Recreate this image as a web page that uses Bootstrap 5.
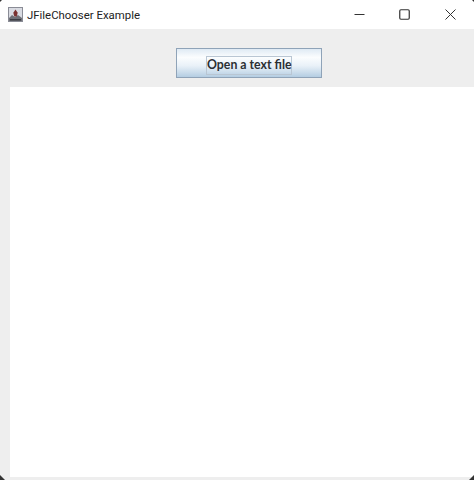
<!DOCTYPE html>
<html lang="en">
<head>
<meta charset="utf-8">
<title>JFileChooser Example</title>
<link href="https://cdn.jsdelivr.net/npm/bootstrap@5.3.0/dist/css/bootstrap.min.css" rel="stylesheet">
<style>
html,body{height:480px;overflow:hidden;background:#fff}
.win-frame{width:474px;height:480px;position:relative;overflow:hidden}
.win-title{height:29px;background:#fff;padding-left:8px;padding-right:1px}
.win-title-text{font:11.4px Roboto,"Liberation Sans",sans-serif;color:#222;margin-left:4px;line-height:30px;white-space:nowrap}
.win-ctrl{width:45.5px;height:29px}
.tool-band{height:58px;background:#eeeeee;padding-top:19px;padding-left:24px}
.open-btn{width:146px;height:30px;padding:5px 0 0;border:1px solid #8fa3b8;border-radius:0;background:linear-gradient(#dfeaf4 0%,#fbfdfe 30%,#e9f1f8 60%,#b4cde2 100%);line-height:0}
.open-label{display:inline-block;font:bold 12.3px/16px Lato,"Liberation Sans",sans-serif;color:#2b2f33;border:1px solid #b9c6d3;width:86px;height:19px;white-space:nowrap;text-align:center;vertical-align:top}
.body-wrap{height:393px;background:#eeeeee;padding:0 0 3px 10px}
.text-pane{height:100%;background:#fff}
.corner-a,.corner-b{position:absolute;width:5px;height:5px;background:#333}
.corner-a{left:-1px;top:-2px;clip-path:polygon(0 0,100% 0,0 100%)}
.corner-b{right:-1px;top:-2px;clip-path:polygon(0 0,100% 0,100% 100%)}
.corner-c{position:absolute;left:0;bottom:0;width:5px;height:5px;background:#333;clip-path:polygon(0 0,100% 100%,0 100%)}
.corner-d{position:absolute;right:0;bottom:0;width:5px;height:5px;background:#333;clip-path:polygon(100% 0,100% 100%,0 100%)}
</style>
</head>
<body>
<div class="win-frame">
  <div class="win-title d-flex align-items-center">
    <svg width="15" height="15" viewBox="0 0 15 15" aria-hidden="true">
      <rect width="15" height="15" fill="#d9dbe2"/>
      <rect x=".5" y=".5" width="14" height="14" fill="none" stroke="#8a8c96"/>
      <path d="M1 11l3-3 3 2 3-2 4 3v3H1z" fill="#6f7077"/>
      <path d="M7.5 2.5l2.2 3.2-1 3.8h-2.4l-1-3.8z" fill="#7a3130"/>
      <path d="M2 12h11v1.5H2z" fill="#3c3d44"/>
    </svg>
    <span class="win-title-text flex-grow-1">JFileChooser Example</span>
    <div class="d-flex">
      <div class="win-ctrl d-flex align-items-center justify-content-center">
        <svg width="11" height="11" viewBox="0 0 11 11"><path d="M.5 5.5h10" stroke="#333" fill="none"/></svg>
      </div>
      <div class="win-ctrl d-flex align-items-center justify-content-center">
        <svg width="11" height="11" viewBox="0 0 11 11"><rect x=".75" y=".75" width="9.5" height="9.5" rx="1.2" fill="none" stroke="#333" stroke-width="1.2"/></svg>
      </div>
      <div class="win-ctrl d-flex align-items-center justify-content-center">
        <svg width="11" height="11" viewBox="0 0 11 11"><path d="M.5.5l10 10M10.5.5l-10 10" stroke="#333" fill="none"/></svg>
      </div>
    </div>
  </div>
  <div class="tool-band text-center">
    <button type="button" class="btn open-btn"><span class="open-label">Open a text file</span></button>
  </div>
  <div class="body-wrap"><div class="text-pane"></div></div>
  <div class="corner-a"></div><div class="corner-b"></div><div class="corner-c"></div><div class="corner-d"></div>
</div>
<script src="https://cdn.jsdelivr.net/npm/bootstrap@5.3.0/dist/js/bootstrap.bundle.min.js"></script>
</body>
</html>
